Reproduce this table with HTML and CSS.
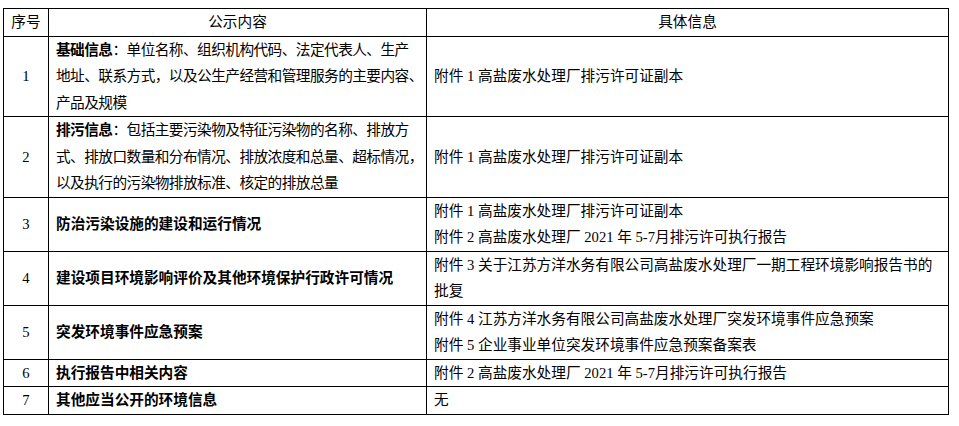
FILE: index.html
```html
<!DOCTYPE html>
<html lang="zh-CN">
<head>
<meta charset="utf-8">
<title>环境信息公开</title>
<link rel="stylesheet" href="styles.css">
</head>
<body>
<table class="info-table">
  <colgroup>
    <col class="col-no">
    <col class="col-content">
    <col class="col-detail">
  </colgroup>
  <thead>
    <tr>
      <th class="center">序号</th>
      <th class="center">公示内容</th>
      <th class="center">具体信息</th>
    </tr>
  </thead>
  <tbody>
    <tr>
      <td class="center">1</td>
      <td class="tight"><b>基础信息</b>：单位名称、组织机构代码、法定代表人、生产<br>地址、联系方式，以及公生产经营和管理服务的主要内容、<br>产品及规模</td>
      <td>附件 1 高盐废水处理厂排污许可证副本</td>
    </tr>
    <tr>
      <td class="center">2</td>
      <td class="tight"><b>排污信息</b>：包括主要污染物及特征污染物的名称、排放方<br>式、排放口数量和分布情况、排放浓度和总量、超标情况，<br>以及执行的污染物排放标准、核定的排放总量</td>
      <td>附件 1 高盐废水处理厂排污许可证副本</td>
    </tr>
    <tr>
      <td class="center">3</td>
      <td><b>防治污染设施的建设和运行情况</b></td>
      <td>附件 1 高盐废水处理厂排污许可证副本<br>附件 2 高盐废水处理厂 2021 年 5-7月排污许可执行报告</td>
    </tr>
    <tr>
      <td class="center">4</td>
      <td><b>建设项目环境影响评价及其他环境保护行政许可情况</b></td>
      <td>附件 3 关于江苏方洋水务有限公司高盐废水处理厂一期工程环境影响报告书的<br>批复</td>
    </tr>
    <tr>
      <td class="center">5</td>
      <td><b>突发环境事件应急预案</b></td>
      <td>附件 4 江苏方洋水务有限公司高盐废水处理厂突发环境事件应急预案<br>附件 5 企业事业单位突发环境事件应急预案备案表</td>
    </tr>
    <tr>
      <td class="center">6</td>
      <td><b>执行报告中相关内容</b></td>
      <td>附件 2 高盐废水处理厂 2021 年 5-7月排污许可执行报告</td>
    </tr>
    <tr>
      <td class="center">7</td>
      <td><b>其他应当公开的环境信息</b></td>
      <td>无</td>
    </tr>
  </tbody>
</table>
</body>
</html>
```
FILE: styles.css
```css
html, body {
  margin: 0;
  background: #ffffff;
}

body {
  padding: 8px 0 0 3px;
  font-family: "Liberation Serif", "Noto Sans CJK SC", serif;
  font-size: 11pt;
  color: #000000;
}

.info-table {
  border-collapse: collapse;
  table-layout: fixed;
  width: 946px;
}

.col-no { width: 45px; }
.col-content { width: 378px; }
.col-detail { width: 522px; }

.info-table th,
.info-table td {
  border: 1px solid #000000;
  padding: 0 6px 0 7px;
  line-height: 26.5px;
  vertical-align: middle;
  text-align: left;
  font-weight: normal;
  white-space: nowrap;
}

.info-table .center {
  text-align: center;
  padding: 0;
}

.info-table .tight {
  letter-spacing: -0.55px;
  padding-right: 0;
}

.info-table b {
  font-weight: bold;
}
```
